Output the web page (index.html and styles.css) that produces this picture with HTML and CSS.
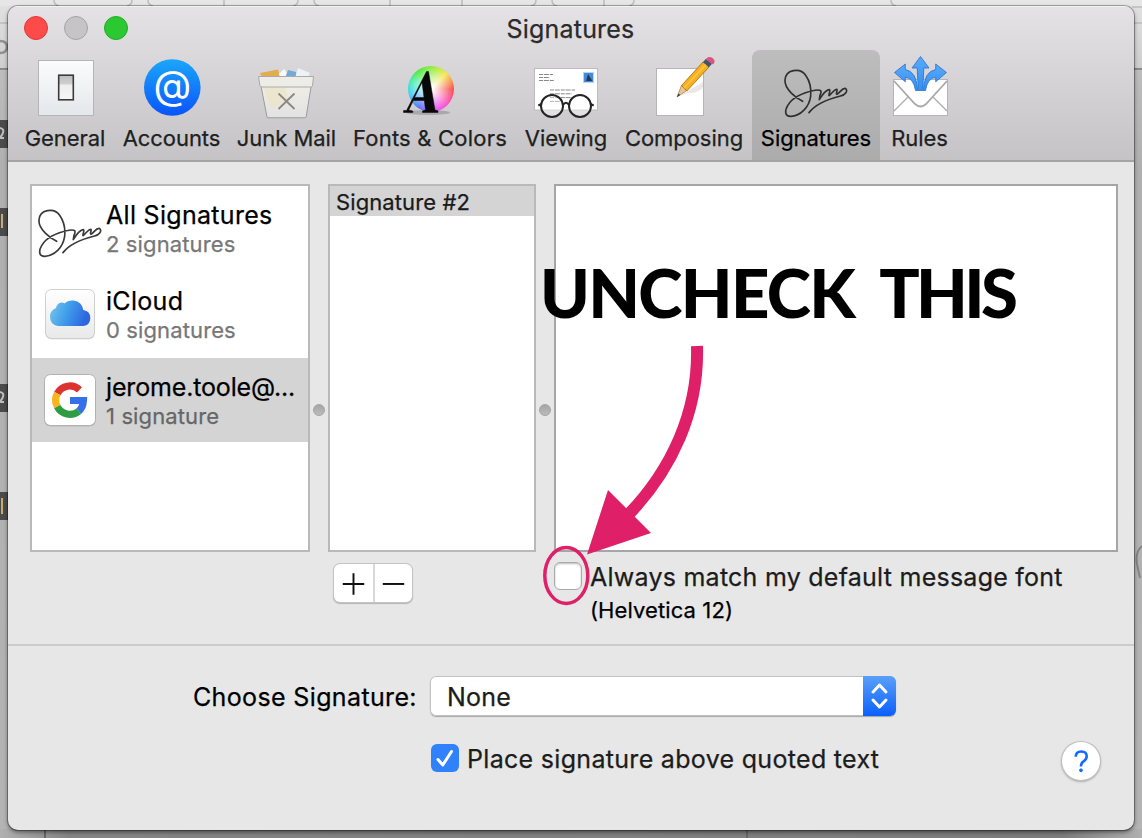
FILE: index.html
```html
<!DOCTYPE html>
<html lang="en">
<head>
<meta charset="utf-8">
<title>Signatures</title>
<link rel="stylesheet" href="styles.css">
</head>
<body>
<svg class="desktop" viewBox="0 0 1142 838" aria-hidden="true">
  <defs>
    <linearGradient id="deskSide" x1="0" y1="0" x2="0" y2="1">
      <stop offset="0" stop-color="#e2e2e2"/><stop offset=".08" stop-color="#cfcfcf"/><stop offset=".085" stop-color="#bdbdbd"/><stop offset=".2" stop-color="#b0b0b0"/><stop offset="1" stop-color="#b4b4b4"/>
    </linearGradient>
    <linearGradient id="deskFoot" x1="0" y1="0" x2="1" y2="0">
      <stop offset="0" stop-color="#b0b0b0"/><stop offset=".06" stop-color="#858585"/><stop offset=".93" stop-color="#7c7c7c"/><stop offset="1" stop-color="#b0b0b0"/>
    </linearGradient>
  </defs>
  <rect width="1142" height="838" fill="url(#deskSide)"/>
  <rect width="1142" height="6" fill="#e6e6e6"/>
  <rect y="829" width="1142" height="9" fill="url(#deskFoot)"/>
  <g fill="none" stroke="#bcbcbc" stroke-width="1.5">
    <path d="M54 0q0 5 5 6M132 0q0 5-5 6M148 0q0 5 5 6M224 0v6M298 0q0 5-5 6M390 0v6M462 0v6M536 0q0 5-5 6M552 0q0 5 5 6M604 0v6M634 0q0 5-5 6M891 0q0 5 5 6M314 0q0 5 5 6"/>
    <path d="M0 23h8M1132 7h10M1134 23h8"/>
    <path d="M0 69h8M1134 69h8" stroke="#8a8a8a" stroke-width="2"/>
  </g>
  <g fill="#4b4b4b"><rect y="120" width="8" height="28"/><rect y="208" width="8" height="28"/><rect y="384" width="8" height="28"/><rect y="492" width="8" height="28"/></g>
  <g fill="none" stroke="#bdbdbd" stroke-width="2"><path d="M0 128q5 1 2.500 6l-2.500 4h4M0 392q5 1 2.500 6l-2.500 4h4"/><path d="M2 214v14M2 498v16" stroke="#c9a875"/></g>
  <path d="M0 41q7 0 7 6t-7 6" fill="none" stroke="#8f8f8f" stroke-width="2.5"/>
  <path d="M1142 546q-7 6-5 18l3 14" fill="none" stroke="#858585" stroke-width="2"/>
  <path d="M45 830v8M747 830v8" stroke="#666" stroke-width="2"/>
</svg>

<svg class="defs" aria-hidden="true">
  <symbol id="scribble" viewBox="520 205 200 150">
    <path d="M578 304C557 293 524 268 525 241C526 208 571 202 587 226C599 243 605 262 602 289C597 323 571 348 543 349C524 350 524 332 533 317C548 291 584 277 615 271C633 268 637 272 630 286L628 299C636 286 648 270 658 269C663 271 655 284 657 287C665 283 671 268 681 268C684 271 676 281 681 283C690 279 695 265 705 265C717 271 706 286 689 289C657 297 616 314 597 338" fill="none" stroke="currentColor" stroke-width="5" stroke-linecap="round" stroke-linejoin="round"/>
  </symbol>
</svg>

<main class="window">
  <header class="header">
    <div class="titlebar">
      <div class="lights"><i class="light close"></i><i class="light min"></i><i class="light max"></i></div>
      <h1 class="title">Signatures</h1>
    </div>
    <nav class="toolbar">
      <a class="tool general">
        <svg class="tool-icon" viewBox="16 50 98 72">
          <defs><linearGradient id="plate" x1="0" y1="0" x2="0" y2="1"><stop stop-color="#fbfcfc"/><stop offset="1" stop-color="#e4e7eb"/></linearGradient><linearGradient id="sw" x1="0" y1="0" x2="0" y2="1"><stop stop-color="#bdbdbd"/><stop offset=".35" stop-color="#cfcfcf"/><stop offset=".4" stop-color="#eee"/><stop offset="1" stop-color="#f6f6f6"/></linearGradient></defs>
          <rect x="38.500" y="60.500" width="55" height="55" fill="url(#plate)" stroke="#b3b5b8"/>
          <rect x="58.700" y="75.200" width="14.600" height="24.600" fill="url(#sw)" stroke="#3a3a3a" stroke-width="1.600"/>
        </svg>
        <span class="tool-label">General</span>
      </a>
      <a class="tool accounts">
        <svg class="tool-icon" viewBox="114 50 115 72">
          <defs><linearGradient id="at" x1="0" y1="0" x2="0" y2="1"><stop stop-color="#1ba6fa"/><stop offset="1" stop-color="#0a54fb"/></linearGradient></defs>
          <circle cx="172.300" cy="87.500" r="28.300" fill="url(#at)"/>
          <text x="172.500" y="98.500" class="at-sign">@</text>
        </svg>
        <span class="tool-label">Accounts</span>
      </a>
      <a class="tool junk">
        <svg class="tool-icon" viewBox="229 50 115 72">
          <defs><linearGradient id="bin" x1="0" y1="0" x2="0" y2="1"><stop stop-color="#efede4"/><stop offset="1" stop-color="#e2e2e3"/></linearGradient></defs>
          <path d="M260 73l18-3.500 2 8h-18z" fill="#e0ae4c"/><path d="M279 74l5-5 6 8h-10z" fill="#fafafa"/><path d="M288 70l8 2 1 6h-12z" fill="#74a9d3"/><path d="M298 68l12 5-2 5h-13z" fill="#e9f3f8"/>
          <path d="M261 86l6 31q0 .8 1 .8h37q1 0 1.200-1l5-31z" fill="url(#bin)" stroke="#9b9b9b"/>
          <path d="M263 87l8 22 17-10-3-12z" fill="#ece2c1" opacity=".6"/>
          <path d="M258.500 76.500h55l-1 9.500q-.5 1-2 1h-48.500q-1.500 0-2-1z" fill="#edece7" stroke="#aaa"/>
          <path d="M278.500 93.500l16 15.500M294.500 93.500l-16 15.500" stroke="#8c8782" stroke-width="1.800"/>
        </svg>
        <span class="tool-label">Junk Mail</span>
      </a>
      <a class="tool fonts">
        <svg class="tool-icon" viewBox="344 50 172 72">
          <foreignObject x="408" y="66" width="46" height="46"><div class="wheel"></div></foreignObject>
          <ellipse cx="428" cy="112.500" rx="22" ry="2.500" fill="#000" opacity=".18"/>
          <path d="M403.500 110.500h3L426.500 71.500h2l6.500 38.500 3 1v1.500h-15.500v-1.500l3-1-1.200-9.500h-11l-4.500 9.500 4 1v1.500h-9.300zM414.500 97.500h9.500l-2-15z" fill="#080808" stroke="#080808" stroke-width=".5"/>
        </svg>
        <span class="tool-label">Fonts &amp; Colors</span>
      </a>
      <a class="tool viewing">
        <svg class="tool-icon" viewBox="516 50 100 72">
          <rect x="534.500" y="68.500" width="63" height="41.500" fill="#fff" stroke="#bcbcbc"/>
          <rect x="583.500" y="72.500" width="10" height="10" fill="#3f8be0" stroke="#bcd4ea"/><path d="M586 81l2-7 4.500 7z" fill="#273a52"/>
          <g stroke="#888" stroke-dasharray="4 .8 5 1" stroke-width="1"><path d="M539 74.500h14M539 77.500h11M539 80.500h15M550 90h25M550 93.800h22M550 97.600h22M550 101.400h10"/></g>
          <g fill="#fff" fill-opacity=".4" stroke="#242424" stroke-width="2"><circle cx="552" cy="106" r="11"/><circle cx="580" cy="106" r="11"/><path d="M563 105q3-4.500 6 0M541.500 104l-3.200 1.500M590.500 104l3.200 1.500" fill="none"/></g>
        </svg>
        <span class="tool-label">Viewing</span>
      </a>
      <a class="tool composing">
        <svg class="tool-icon" viewBox="616 50 136 72">
          <rect x="656.500" y="68.500" width="47" height="47" fill="#fff" stroke="#b5b5b7"/>
          <path d="M679 96l24-14v6q-7 6-15 5z" fill="#000" opacity=".09"/>
          <path d="M677 97l4.500-11.500 5.300 5z" fill="#e8c592" stroke="#8c6a42" stroke-width=".6"/>
          <path d="M681.500 85.500L703 62l6 5-22.200 24z" fill="#f8b01e" stroke="#9c6513" stroke-width=".8"/>
          <path d="M684 88L706 64.500" stroke="#ffc741" stroke-width="1.500"/>
          <path d="M677 97l1.500-3.500 1.700 1.500z" fill="#333"/>
          <path d="M703 62l3-3.200 6 5-3 3.400z" fill="#39566a"/>
          <path d="M705.500 59.500q3-4 7-1.500 4 3 .5 6.500z" fill="#dc5380"/>
        </svg>
        <span class="tool-label">Composing</span>
      </a>
      <a class="tool signatures selected">
        <svg class="tool-icon scribble-tool" viewBox="752 50 128 72"><use href="#scribble" x="783.300" y="68.300" width="66.670" height="50"/></svg>
        <span class="tool-label">Signatures</span>
      </a>
      <a class="tool rules">
        <svg class="tool-icon" viewBox="880 50 79 72">
          <defs><linearGradient id="arr" x1="0" y1="0" x2="0" y2="1"><stop stop-color="#58a9fb"/><stop offset="1" stop-color="#3490f2"/></linearGradient></defs>
          <rect x="893.500" y="79.500" width="54" height="36" fill="#fff" stroke="#b5b5b7"/>
          <path d="M894 111l14-14M947 111l-14-14" stroke="#aaa" stroke-width="1.200"/>
          <path d="M894 81l21 23q5.700 5 11 0l21-23" fill="none" stroke="#aaa" stroke-width="1.800"/>
          <g fill="url(#arr)" stroke="#2a6fc8" stroke-width=".8">
            <path d="M920.500 56.500l8.500 11.500h-5.200l-1 22.500h-4.600l-1-22.500H912z"/>
            <path d="M894.500 72.500l10.800-8.500v5.500q11.500 2 12.500 21h-2.300q-2-12.500-10.200-13.200v4.500z"/>
            <path d="M946.500 72.500l-10.800-8.500v5.500q-11.500 2-12.500 21h2.300q2-12.500 10.200-13.200v4.500z"/>
          </g>
        </svg>
        <span class="tool-label">Rules</span>
      </a>
    </nav>
  </header>

  <section class="panels">
    <ul class="panel accounts-list">
      <li class="account">
        <svg class="account-icon" viewBox="32 186 74 84"><use href="#scribble" x="37.300" y="208.300" width="66.670" height="50"/></svg>
        <div class="account-text"><b class="account-name">All Signatures</b><span class="account-count">2 signatures</span></div>
      </li>
      <li class="account">
        <svg class="account-icon" viewBox="32 272 74 84">
          <defs><linearGradient id="tile" x1="0" y1="0" x2="0" y2="1"><stop stop-color="#fff"/><stop offset="1" stop-color="#e9e9e9"/></linearGradient><linearGradient id="cloud" x1="0" y1="0" x2="1" y2=".25"><stop stop-color="#79c9ee"/><stop offset=".5" stop-color="#419eea"/><stop offset="1" stop-color="#2d66df"/></linearGradient></defs>
          <rect x="45.500" y="290.300" width="49" height="49" rx="6" fill="#999" opacity=".55"/>
          <rect x="45.500" y="289.500" width="49" height="49" rx="6" fill="url(#tile)" stroke="#cfcfcf"/>
          <path d="M58 326q-8-1-8-9.500 0-6 6-8.500 1-5 5.500-5.500 2 0 3 1Q68 300 73.500 300.500q8.500 1 9.800 9.500 7 1 7 8 0 7-7 8z" fill="url(#cloud)"/>
        </svg>
        <div class="account-text"><b class="account-name">iCloud</b><span class="account-count">0 signatures</span></div>
      </li>
      <li class="account current">
        <svg class="account-icon" viewBox="32 358 74 84">
          <rect x="44.500" y="375.300" width="51" height="51" rx="6" fill="#777" opacity=".6"/>
          <rect x="44.500" y="374.500" width="51" height="51" rx="6" fill="#fff" stroke="#b2b2b2"/>
          <g fill="none" stroke-width="7.200">
            <path d="M79.500 389.800A14.200 14.200 0 0 0 57.300 393.500" stroke="#dd3330"/>
            <path d="M57.300 393.500A14.200 14.200 0 0 0 57.300 406.700" stroke="#f9b61c"/>
            <path d="M57.300 406.700A14.200 14.200 0 0 0 78.800 411.200" stroke="#2f9b42"/>
            <path d="M78.800 411.200Q83 407.500 83.400 400.500H70" stroke="#3470ea"/>
          </g>
        </svg>
        <div class="account-text"><b class="account-name email">jerome.toole@...</b><span class="account-count">1 signature</span></div>
      </li>
    </ul>
    <div class="splitter"><i class="dot"></i></div>
    <div class="panel names"><div class="name-row">Signature #2</div></div>
    <div class="splitter"><i class="dot"></i></div>
    <div class="panel editor"></div>
  </section>

  <section class="under">
    <div class="add-remove">
      <button class="seg"><svg viewBox="0 0 40 38"><path d="M9 20h22M20 9v22"/></svg></button>
      <button class="seg"><svg viewBox="0 0 38 38"><path d="M8 20h22"/></svg></button>
    </div>
    <label class="match">
      <i class="box"></i>
      <span class="match-text"><span>Always match my default message font</span><small>(Helvetica 12)</small></span>
    </label>
  </section>

  <section class="footer">
    <div class="choose">
      <span class="choose-label">Choose Signature:</span>
      <div class="select"><span>None</span><svg class="stepper" viewBox="0 0 33 40"><path d="M10 16l6.500-7 6.500 7M10 24l6.500 7 6.500-7"/></svg></div>
    </div>
    <div class="place">
      <svg class="checked" viewBox="0 0 28 28"><path d="M7 15.500l4.800 5.500L20.500 7.500"/></svg>
      <span>Place signature above quoted text</span>
    </div>
    <button class="help"><svg viewBox="0 0 40 40"><path d="M14.500 15.500q0-5.500 5.700-5.500 5.800 0 5.800 5 0 3-3 5.200-3 2-3 4.800v.8"/><circle cx="20" cy="29.800" r="1.500"/></svg></button>
  </section>
</main>

<div class="callout"><span class="word-one">UNCHECK</span> <span class="word-two">THIS</span></div>
<svg class="arrow" viewBox="0 0 1142 838" aria-hidden="true">
  <path d="M697 346C699 412 671 470 629 514" fill="none" stroke="#df2069" stroke-width="12"/>
  <path d="M587 554.500L608 490l43 43z" fill="#df2069"/>
  <ellipse cx="566.300" cy="575.500" rx="21.500" ry="28" fill="none" stroke="#df2069" stroke-width="3.500"/>
</svg>
</body>
</html>
```
FILE: styles.css
```css
* { box-sizing: border-box; }
body { margin: 0; width: 1142px; height: 838px; overflow: hidden; position: relative; font-family: Inter, "Liberation Sans", sans-serif; font-size: 25px; font-weight: 400; letter-spacing: .3px; color: #000; padding: 6px 8px 8px; }
.desktop { position: absolute; left: 0; top: 0; width: 1142px; height: 838px; }
.defs { position: absolute; width: 0; height: 0; }

.window { position: relative; width: 1126px; height: 824px; border-radius: 10px; background: #e7e7e7; box-shadow: 0 0 0 1px rgba(0,0,0,.28), 0 2px 4px rgba(0,0,0,.5); overflow: hidden; white-space: nowrap; -webkit-text-stroke: .25px; }
.header { height: 156px; background: linear-gradient(#e4e2e5, #d5d3d6 48%, #c5c3c6); border-top: 1px solid #f3f2f3; border-bottom: 2px solid #a4a3a5; }
.titlebar { height: 43px; display: flex; padding-left: 16px; }
.lights { display: flex; gap: 16px; padding-top: 9px; width: 104px; }
.light { width: 24px; height: 24px; border-radius: 50%; border: 1px solid; }
.close { background: #fd4b4a; border-color: #e0383a; }
.min { background: #c6c4c7; border-color: #a5a3a6; }
.max { background: #2bc832; border-color: #1ead25; }
.title { margin: 0; flex: 1; padding: 7px 121px 0 0; font-size: 25px; line-height: 30px; font-weight: 400; letter-spacing: .2px; text-align: center; color: #2b2a2c; }
.toolbar { display: flex; padding-left: 8px; }
.tool { height: 110px; display: flex; flex-direction: column; align-items: center; color: #201f21; }
.tool-icon { width: 100%; height: 72px; }
.tool-label { font-size: 22px; line-height: 28px; margin-top: 2px; letter-spacing: -.05px; }
.general { width: 98px; } .accounts { width: 115px; } .junk { width: 115px; } .fonts { width: 172px; }
.viewing { width: 100px; } .composing { width: 136px; } .signatures { width: 128px; } .rules { width: 79px; }
.fonts .tool-label { letter-spacing: .2px; }
.selected { background: linear-gradient(#bebdbe, #adacad); border-radius: 8px 8px 0 0; color: #000; }
.scribble-tool { color: #303030; }
.at-sign { font: 39px Inter, sans-serif; fill: #fff; text-anchor: middle; -webkit-text-stroke: 0; }
.wheel { width: 46px; height: 46px; border-radius: 50%; background: radial-gradient(#fff 5%, rgba(255,255,255,0) 70%), conic-gradient(#85ee39, #f5e64a 45deg, #f94d4a 90deg, #fb51c8 135deg, #d858fb 170deg, #5473f8 215deg, #44cdf6 255deg, #40edb3 290deg, #4fe83e 325deg, #85ee39); }

.panels { display: flex; padding: 22px 16px 0 22px; }
.panel { height: 368px; border: 2px solid #b9b9b9; background: #fff; margin: 0; padding: 0; }
.accounts-list { width: 280px; display: flex; flex-direction: column; gap: 2px; list-style: none; }
.account { height: 84px; display: flex; }
.account-icon { width: 74px; height: 84px; color: #3a3a3a; }
.account-text { display: flex; flex-direction: column; align-items: flex-start; padding-top: 14px; }
.account-name { font-weight: 400; font-size: 25px; line-height: 30px; }
.email { letter-spacing: -.15px; }
.account-count { font-size: 22px; line-height: 28px; color: #777; letter-spacing: .12px; }
.current { background: #d4d4d4; }
.current .account-count { color: #666; }
.splitter { width: 18px; display: flex; align-items: center; justify-content: center; padding-top: 84px; }
.dot { width: 12px; height: 12px; border-radius: 50%; background: linear-gradient(#a5a5a5, #bcbcbc); border: 1px solid #a5a5a5; }
.names { width: 208px; }
.name-row { height: 30px; background: #d4d4d4; padding: 2px 0 0 6px; font-size: 22px; line-height: 28px; letter-spacing: .1px; color: #1a1a1a; }
.editor { width: 564px; border-color: #a6a6a6; }

.under { height: 92px; display: flex; align-items: flex-start; padding: 12px 0 0 326px; }
.add-remove { display: flex; width: 78px; height: 38px; border-radius: 6px; background: #fff; box-shadow: 0 0 0 1px #c4c4c4, 0 1px 1px 1px rgba(0,0,0,.22); }
.seg { border: 0; padding: 0; background: none; width: 39px; height: 38px; }
.seg + .seg { border-left: 2px solid #d9d9d9; }
.seg svg { display: block; width: 100%; height: 38px; fill: none; stroke: #111; stroke-width: 2; }
.match { display: flex; margin-left: 142px; }
.box { width: 28px; height: 28px; border-radius: 6px; border: 1px solid #aaa; background: #fff; box-shadow: inset 0 1px 2px #bbb; margin-top: -2px; }
.match-text { display: flex; flex-direction: column; align-items: flex-start; margin: -2px 0 0 8px; line-height: 30px; color: #1c1c1c; letter-spacing: .25px; }
.match-text small { font-size: 22px; line-height: 30px; color: #000; margin-top: 3px; letter-spacing: .1px; }

.footer { position: relative; border-top: 2px solid #cbcbcb; height: 184px; padding-top: 30px; }
.choose { display: flex; padding-left: 185px; }
.choose-label { width: 237px; line-height: 42px; letter-spacing: .36px; }
.select { width: 466px; height: 40px; display: flex; justify-content: space-between; background: #fff; border-radius: 6px; box-shadow: inset 0 0 0 1px #c2c2c2, 0 1px 1px rgba(0,0,0,.28); padding-left: 17px; line-height: 42px; color: #1c1c1c; letter-spacing: .2px; }
.stepper { width: 33px; height: 40px; border-radius: 0 6px 6px 0; background: linear-gradient(#5aa0fa, #0a60fd); fill: none; stroke: #fff; stroke-width: 3; stroke-linecap: round; stroke-linejoin: round; }
.place { display: flex; padding: 26px 0 0 423px; line-height: 30px; color: #1c1c1c; letter-spacing: .31px; }
.checked { width: 28px; height: 28px; border-radius: 6px; background: #2f82fc; fill: none; stroke: #fff; stroke-width: 3; stroke-linecap: round; stroke-linejoin: round; margin-right: 8px; }
.help { position: absolute; right: 34px; top: 96px; width: 38px; height: 38px; border-radius: 50%; border: 0; padding: 0; background: #fff; box-shadow: 0 0 0 1px #c0c0c0, 0 1px 2px 1px rgba(0,0,0,.25); }
.help svg { width: 38px; height: 38px; display: block; fill: none; stroke: #1269fb; stroke-width: 2.7; }
.help circle { fill: #1269fb; stroke-width: 1; }

.callout { position: absolute; left: 540px; top: 247px; font: 900 67px/90px Lato, sans-serif; color: #000; white-space: nowrap; word-spacing: 9px; }
.word-one { letter-spacing: -1.7px; }
.word-two { letter-spacing: -3.6px; }
.arrow { position: absolute; left: 0; top: 0; width: 1142px; height: 838px; pointer-events: none; }
```
